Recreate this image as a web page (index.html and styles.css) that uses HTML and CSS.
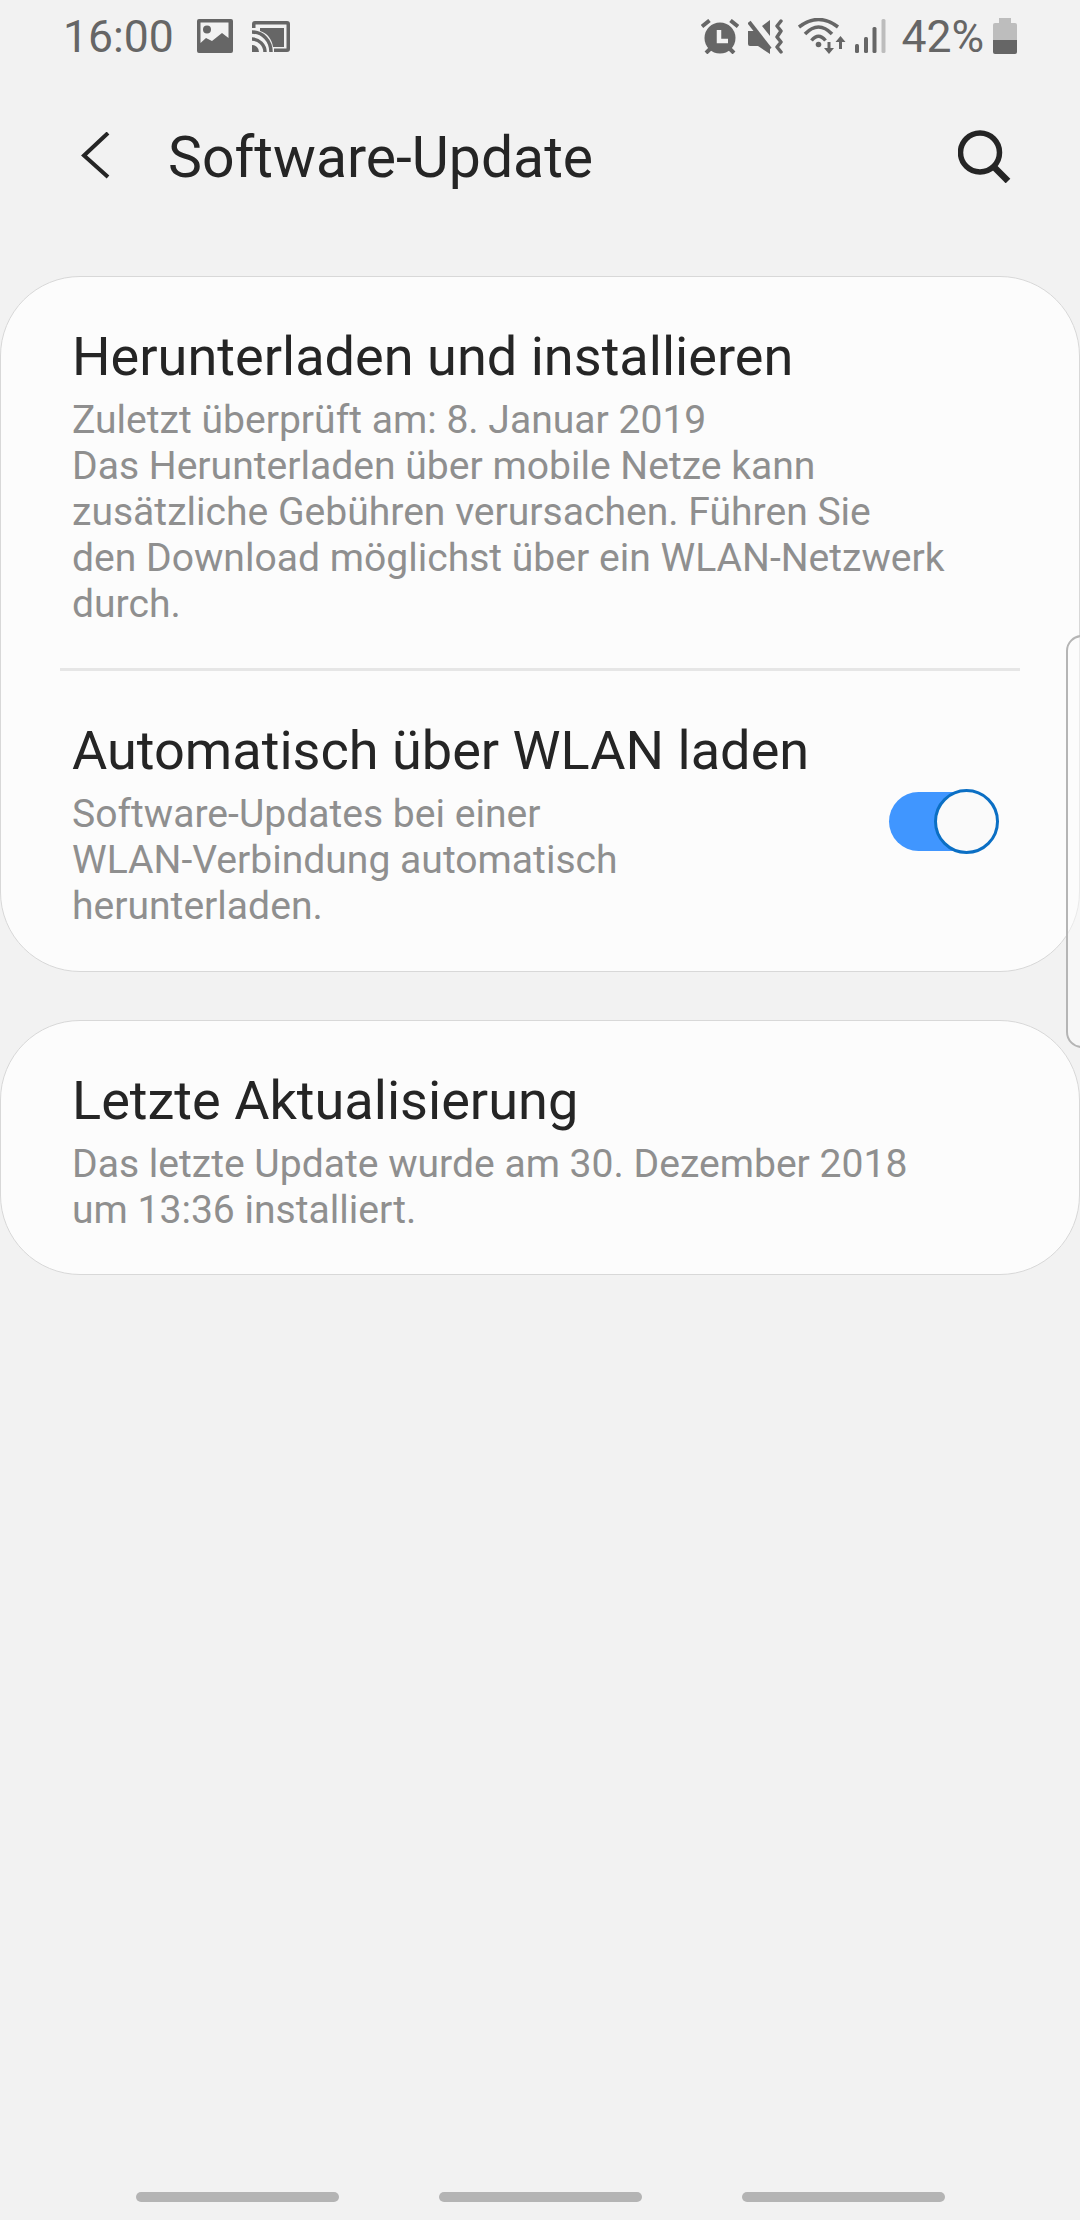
FILE: index.html
```html
<!DOCTYPE html>
<html lang="de">
  <head>
    <meta charset="UTF-8" />
    <title>Software-Update</title>
    <link rel="stylesheet" href="styles.css">
  </head>
  <body>
    <div class="main">
      <div class="status-bar">
        <div class="status-left">
          <span class="time">16:00</span>
          <svg class="icon-pic" width="36" height="34" viewBox="0 0 36 34">
            <path fill="#666" fill-rule="evenodd" d="M2 0h32a2 2 0 0 1 2 2v30a2 2 0 0 1-2 2H2a2 2 0 0 1-2-2V2a2 2 0 0 1 2-2zM3.500 3.500v20.500L9 19l6 3 10-8 6.500 5V3.500z"/>
            <circle cx="10" cy="10.500" r="4" fill="#666"/>
          </svg>
          <svg class="icon-cast" width="38" height="31" viewBox="0 0 38 31">
            <path fill="#666" d="M3 0h32a3 3 0 0 1 3 3v25a3 3 0 0 1-3 3H22v-3.500h12.500v-24h-31V7H0V3a3 3 0 0 1 3-3z"/>
            <path fill="#666" d="M8 7h24v19H21C20 18 15 12 8 10z"/>
            <path fill="none" stroke="#666" stroke-width="3.500" d="M0 11c11 0 19 9 19 20M0 18c7 0 13 6 13 13"/>
            <path fill="#666" d="M0 24a7 7 0 0 1 7 7H0z"/>
          </svg>
        </div>
        <div class="status-right">
          <svg width="38" height="35" viewBox="0 0 38 35">
            <circle cx="19" cy="19" r="15.500" fill="#666"/>
            <path fill="none" stroke="#f2f2f2" stroke-width="4.500" d="M18 11v11h9"/>
            <path fill="none" stroke="#666" stroke-width="4" d="M1 7.500L8.500 1.500M37 7.500L29.500 1.500M5 34l5-5M33 34l-5-5"/>
          </svg>
          <svg class="icon-mute" width="36" height="35" viewBox="0 0 36 35">
            <path fill="#666" d="M0 12h8l14 16v7L10 27H2a2 2 0 0 1-2-2zM14 7l8-6v16z"/>
            <path fill="none" stroke="#666" stroke-width="4" d="M1 3l21 27"/>
            <path fill="none" stroke="#666" stroke-width="3.500" stroke-linecap="round" stroke-linejoin="round" d="M33 2l-4 5 4 5-4 6 4 5-4 5 4 5"/>
          </svg>
          <svg class="icon-wifi" width="48" height="36" viewBox="0 0 48 36">
            <path fill="none" stroke="#666" stroke-width="3.500" d="M1 9Q20.500-6 40 9M7 16Q20.500 2 34 16M13.500 22.500Q20.500 14 27.500 22.500"/>
            <circle cx="20.500" cy="26.500" r="2.800" fill="#666"/>
            <path fill="#666" d="M29.500 24h3v6h3.500l-5 6-5-6h3.500zM41 31h3v-7h3.500l-5-6-5 6H41z"/>
          </svg>
          <svg class="icon-signal" width="31" height="34" viewBox="0 0 31 34">
            <rect x="0" y="25" width="4" height="9" rx="1.500" fill="#666"/>
            <rect x="9" y="18" width="4" height="16" rx="1.500" fill="#666"/>
            <rect x="17.500" y="8" width="4" height="26" rx="1.500" fill="#666"/>
            <rect x="26.500" y="0" width="4" height="34" rx="1.500" fill="#bdbdbd"/>
          </svg>
          <span class="battery-text">42%</span>
          <svg class="icon-battery" width="24" height="36" viewBox="0 0 24 36">
            <path fill="#bdbdbd" d="M6 0h12v5h4a2 2 0 0 1 2 2v15H0V7a2 2 0 0 1 2-2h4z"/>
            <path fill="#666" d="M0 22h24v12a2 2 0 0 1-2 2H2a2 2 0 0 1-2-2z"/>
          </svg>
        </div>
      </div>

      <div class="app-bar">
        <svg class="back" width="30" height="48" viewBox="0 0 30 48">
          <path fill="none" stroke="#252525" stroke-width="4" d="M28 1L4 23.500 28 45"/>
        </svg>
        <h1 class="heading">Software-Update</h1>
        <svg class="search" width="54" height="54" viewBox="0 0 54 54">
          <circle cx="22" cy="23.500" r="19.500" fill="none" stroke="#252525" stroke-width="5.500"/>
          <path fill="none" stroke="#252525" stroke-width="6.500" d="M35 37l15 15"/>
        </svg>
      </div>

      <div class="card">
        <div class="row">
          <div class="title">Herunterladen und installieren</div>
          <div class="sub">Zuletzt überprüft am: 8. Januar 2019<br>Das Herunterladen über mobile Netze kann<br>zusätzliche Gebühren verursachen. Führen Sie<br>den Download möglichst über ein WLAN-Netzwerk<br>durch.</div>
        </div>
        <div class="divider"></div>
        <div class="row row-switch">
          <div>
            <div class="title">Automatisch über WLAN laden</div>
            <div class="sub">Software-Updates bei einer<br>WLAN-Verbindung automatisch<br>herunterladen.</div>
          </div>
          <div class="switch"><div class="knob"></div></div>
        </div>
      </div>

      <div class="card card-last">
        <div class="row">
          <div class="title">Letzte Aktualisierung</div>
          <div class="sub">Das letzte Update wurde am 30. Dezember 2018<br>um 13:36 installiert.</div>
        </div>
      </div>

      <div class="nav-bar">
        <div class="nav-item"></div>
        <div class="nav-item"></div>
        <div class="nav-item"></div>
      </div>

      <div class="edge-handle"></div>
    </div>
  </body>
</html>
```

FILE: styles.css
```css
* {
  padding: 0;
  margin: 0;
  box-sizing: border-box;
  font-family: "Roboto", sans-serif;
}

body {
  background-color: #f2f2f2;
}

.main {
  position: relative;
  height: 2220px;
  display: flex;
  flex-direction: column;
  overflow: hidden;
}

.status-bar {
  height: 74px;
  display: flex;
  justify-content: space-between;
  align-items: center;
  padding: 0 63px 0 63px;
  color: #666;
  font-size: 44.5px;
}

.status-bar svg {
  margin-bottom: 2px;
}

.status-left {
  display: flex;
  align-items: center;
}

.time {
  margin-right: 23px;
}

.icon-cast {
  margin-left: 19px;
}

.status-right {
  display: flex;
  align-items: center;
}

.icon-mute {
  margin-left: 9px;
}

.icon-wifi {
  margin-left: 14px;
}

.icon-signal {
  margin-left: 9px;
}

.battery-text {
  margin-left: 15px;
  margin-right: 9px;
}

.app-bar {
  height: 130px;
  display: flex;
  align-items: center;
  padding: 34px 68px 0 80px;
}

.back {
  margin-right: 58px;
}

.heading {
  flex: 1;
  margin-top: 2px;
  font-size: 57.1px;
  font-weight: 400;
  color: #252525;
}

.card {
  margin-top: 72px;
  background-color: #fcfcfc;
  border: 1px solid #d8d8d8;
  border-radius: 80px;
  height: 696px;
}

.card-last {
  margin-top: 48px;
  height: 255px;
}

.row {
  padding: 50px 60px 0 71px;
}

.row-switch {
  display: flex;
  align-items: center;
  justify-content: space-between;
  padding: 50px 80px 0 71px;
}

.title {
  font-size: 54.1px;
  line-height: 60px;
  color: #252525;
}

.sub {
  margin-top: 10px;
  font-size: 39.1px;
  line-height: 46px;
  color: #8f8f8f;
}

.divider {
  margin: 41px 59px 0 59px;
  height: 3px;
  background-color: #e6e6e6;
}

.switch {
  position: relative;
  width: 94px;
  height: 59px;
  margin-bottom: 8px;
  margin-right: 16px;
  border-radius: 30px;
  background-color: #4096ff;
}

.knob {
  position: absolute;
  right: -16px;
  top: -3px;
  width: 65px;
  height: 65px;
  border-radius: 50%;
  border: 3px solid #0b6fc4;
  background-color: #fafafa;
}

.nav-bar {
  position: absolute;
  left: 136px;
  bottom: 18px;
  display: flex;
  gap: 100px;
}

.nav-item {
  width: 203px;
  height: 10px;
  border-radius: 5px;
  background-color: #b4b4b4;
}

.edge-handle {
  position: absolute;
  top: 635px;
  right: -20px;
  width: 34px;
  height: 413px;
  border: 2px solid #b5b5b5;
  border-radius: 16px;
  background-color: rgba(252, 252, 252, 0.5);
}
```
